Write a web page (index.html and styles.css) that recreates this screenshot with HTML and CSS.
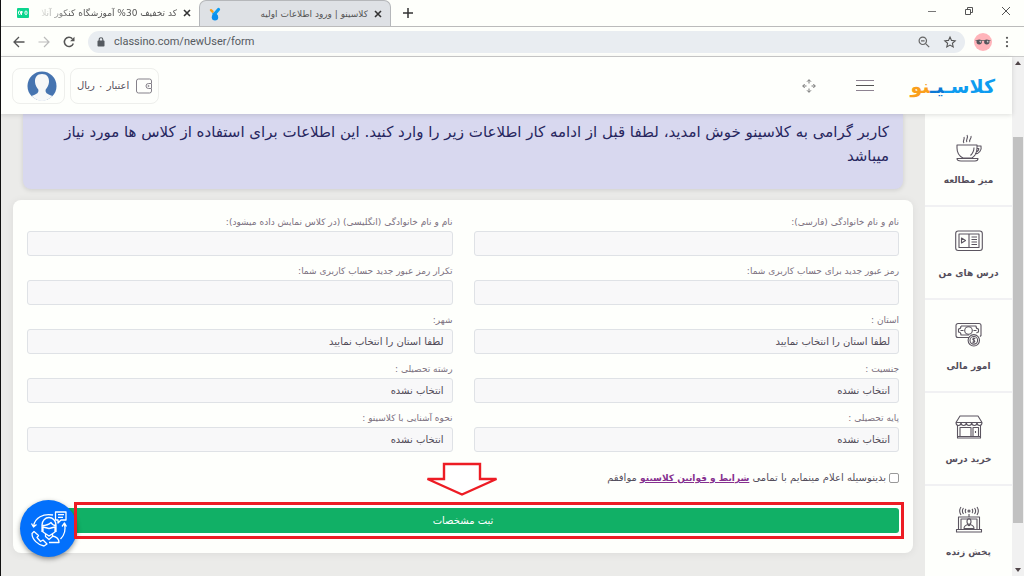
FILE: index.html
```html
<!DOCTYPE html>
<html lang="fa">
<head>
<meta charset="utf-8">
<title>کلاسینو | ورود اطلاعات اولیه</title>
<link rel="stylesheet" href="styles.css">
</head>
<body>
<div class="browser">
  <div class="tabs">
    <div class="tab">
      <svg class="favicon" width="12" height="12" viewBox="0 0 12 12"><rect y="1" width="12" height="10" rx="1" fill="#0cd58e"/><g fill="none" stroke="#fff" stroke-width="1"><rect x="1.5" y="4" width="2" height="3.5" rx="1"/><path d="M4.5 4v4M4.5 5H6"/><rect x="8" y="4" width="2" height="3.5" rx="1"/></g></svg>
      <span class="tab-title faded" dir="rtl">کد تخفیف 30% آموزشگاه کنکور آنلا</span>
      <button class="plain" aria-label="Close tab"><svg width="8" height="8" viewBox="0 0 8 8"><path d="M1 1l6 6M7 1L1 7" stroke="#333" stroke-width="1.6"/></svg></button>
    </div>
    <div class="tab active">
      <svg class="favicon" width="12" height="14" viewBox="0 0 12 14"><path d="M6 6.500L9.500 2.500" stroke="#0d9cf0" stroke-width="3.200" stroke-linecap="round"/><path d="M5.500 5.500l.5 4" stroke="#0d9cf0" stroke-width="4.500"/><circle cx="6" cy="10.200" r="3.200" fill="#0d8fec"/><path d="M2 3.200l1.500 1.500" stroke="#f9a11b" stroke-width="2.400" stroke-linecap="round"/></svg>
      <span class="tab-title" dir="rtl">کلاسینو | ورود اطلاعات اولیه</span>
      <button class="plain" aria-label="Close tab"><svg width="8" height="8" viewBox="0 0 8 8"><path d="M1 1l6 6M7 1L1 7" stroke="#333" stroke-width="1.6"/></svg></button>
    </div>
    <button class="plain new-tab" aria-label="New tab"><svg width="10" height="10" viewBox="0 0 10 10"><path d="M5 0v10M0 5h10" stroke="#333" stroke-width="1.5"/></svg></button>
    <div class="window-controls">
      <button class="plain" aria-label="Minimize"><svg width="10" height="10" viewBox="0 0 10 10"><path d="M1 5.5h8" stroke="#777"/></svg></button>
      <button class="plain" aria-label="Restore"><svg width="10" height="10" viewBox="0 0 10 10" fill="none" stroke="#555"><path d="M1.500 3.500h5v5h-5zM3.500 3.500v-2h5v5h-2"/></svg></button>
      <button class="plain" aria-label="Close"><svg width="10" height="10" viewBox="0 0 10 10"><path d="M1 1l8 8M9 1L1 9" stroke="#555"/></svg></button>
    </div>
  </div>
  <div class="toolbar">
    <button class="plain" aria-label="Back"><svg width="12" height="12" viewBox="0 0 12 12" fill="none" stroke="#555" stroke-width="1.3"><path d="M11.5 6H1.5M6 1L1 6l5 5"/></svg></button>
    <button class="plain" aria-label="Forward"><svg width="12" height="12" viewBox="0 0 12 12" fill="none" stroke="#bbb" stroke-width="1.2"><path d="M.5 6h10M6 1l5 5-5 5"/></svg></button>
    <button class="plain" aria-label="Reload"><svg width="12" height="12" viewBox="0 0 12 12" fill="none" stroke="#555" stroke-width="1.5"><path d="M10.3 7.5A4.6 4.6 0 1 1 9.4 2.8"/><path d="M11.5.8v4.4H7.1z" fill="#555" stroke="none"/></svg></button>
    <div class="address">
      <svg width="8" height="10" viewBox="0 0 8 10"><rect x=".5" y="3.6" width="7" height="6" rx=".8" fill="#555a60"/><path d="M2.2 4V2.5a1.8 1.8 0 0 1 3.6 0V4" fill="none" stroke="#555a60" stroke-width="1.1"/></svg>
      <input class="url" aria-label="Address" value="classino.com/newUser/form">
      <button class="plain" aria-label="Zoom"><svg width="12" height="12" viewBox="0 0 12 12" fill="none" stroke="#666" stroke-width="1.2"><circle cx="4.8" cy="4.8" r="3.7"/><path d="M7.6 7.6l3.6 3.6M3 4.8h3.6"/></svg></button>
      <button class="plain" aria-label="Bookmark"><svg width="12" height="12" viewBox="0 0 12 12" fill="none" stroke="#555" stroke-width="1.1"><path d="M6 1l1.5 3.4 3.7.4-2.8 2.5.8 3.6L6 9.1l-3.2 1.8.8-3.6L.8 4.8l3.7-.4z"/></svg></button>
    </div>
    <svg class="profile" width="18" height="18" viewBox="0 0 18 18"><circle cx="9" cy="9" r="9" fill="#ffb4ba"/><path d="M1.500 7.500h15" stroke="#666" stroke-width=".8"/><ellipse cx="5.200" cy="9" rx="2.700" ry="2.400" fill="#55545b"/><ellipse cx="12.800" cy="9" rx="2.700" ry="2.400" fill="#55545b"/><path d="M5.800 7.800l1 1.600M13.200 7.800l1 1.600" stroke="#ccc" stroke-width="1.300"/></svg>
    <button class="plain" aria-label="Menu"><svg width="4" height="12" viewBox="0 0 4 12" fill="#555"><circle cx="2" cy="1.8" r="1.1"/><circle cx="2" cy="6" r="1.1"/><circle cx="2" cy="10.2" r="1.1"/></svg></button>
  </div>
</div>

<div class="viewport">
  <div class="site" dir="rtl">
    <header class="site-header">
      <a class="logo" href="#"><span>کلاسـ</span><span class="deep">یـ</span><span class="orange">نو</span></a>
      <button class="plain menu" aria-label="منو"><svg width="18" height="12" viewBox="0 0 18 12"><path d="M0 .5h18M0 10.500h18" stroke="#8d8291"/><path d="M0 5.500h18" stroke="#555"/></svg></button>
      <button class="plain move" aria-label="تمام صفحه"><svg width="14" height="14" viewBox="0 0 14 14" fill="none" stroke="#777" stroke-width="1"><path d="M7 4.500V.8M5 2.700l2-2 2 2M7 9.500v3.700M5 11.300l2 2 2-2M4.500 7H.8M2.700 5l-2 2 2 2M9.500 7h3.700M11.300 5l2 2-2 2"/></svg></button>
      <div class="account">
        <a class="chip credit" href="#"><svg width="16" height="16" viewBox="0 0 16 16" fill="none" stroke="#85818a"><path d="M15.500 5V3A2 2 0 0 0 13.500 1H2.500A2 2 0 0 0 .5 3v10a2 2 0 0 0 2 2h11a2 2 0 0 0 2-2v-2"/><path d="M15.500 5.500h-3a2.500 2.500 0 0 0 0 5h3z"/><circle cx="12.500" cy="8" r=".6"/></svg><span>اعتبار ۰ ریال</span></a>
        <a class="chip avatar" href="#" aria-label="حساب کاربری"><svg width="30" height="30" viewBox="0 0 30 30"><circle cx="15" cy="15" r="14.500" fill="#4674b0"/><path d="M15 3c-5 0-7.300 3.500-7 8 .2 3.500 1.800 5.500 3.300 7.500.6 3-.8 4.500-6.800 6.500C8 28.500 12 30 15 30s7-1.500 10.500-5c-6-2-7.400-3.500-6.800-6.500 1.500-2 3.100-4 3.300-7.500.3-4.500-2-8-7-8z" fill="#f7f8f8"/></svg></a>
      </div>
    </header>
    <div class="site-body">
      <nav class="sidebar">
        <a href="#"><svg width="28" height="28" viewBox="0 0 28 28"><path d="M2 11h20v3c0 5-2 8-5 10H8c-4-2-6-5-6-10zM2 24.500h21c0 2-1 2.500-3 2.500H6c-3 0-4-1-4-2.500zM22 12h4c1 4-2 8-6 8M22 14.500h1.800c0 2-1 3-2.800 3.500M19 13.500c0 4-1.500 6-3.500 8M9 9c-2-2 1-3 0-6M12 8c-2-2 2-4 0-7M15 8c-2-2 2-3 1-6"/></svg><span>میز مطالعه</span></a>
        <a href="#"><svg width="28" height="28" viewBox="0 0 28 28"><rect x=".7" y="4" width="26.600" height="19.500" rx="2.500"/><path d="M4 7h20v13.500H4zM14 7v13.500M6.500 11v5l4-2.500zM16.500 10h5.500M16.500 12.500h5.500M16.500 15h5.500M16.500 17.500h5.500M12 23.500h4"/></svg><span>درس های من</span></a>
        <a href="#"><svg width="28" height="28" viewBox="0 0 28 28"><path d="M14 17.500H3a2 2 0 0 1-2-2v-10a2 2 0 0 1 2-2h21a2 2 0 0 1 2 2v10l-1 1M6 6h15c0 2 .5 3 2.500 3v3c-1 0-1.500.5-2 1M14 15H6c0-2-.5-3-2.500-3V9C5.500 9 6 8 6 6M5.500 10.500h3M18.500 10.500h3"/><circle cx="13.500" cy="10.500" r="3.800"/><circle cx="18.800" cy="20.300" r="5.700"/><circle cx="18.800" cy="20.300" r="3.800"/><path d="M20.300 18.700c-2-1.200-3.600.7-1.500 1.600s.5 2.800-1.500 1.600M18.800 17.500v5.600"/></svg><span>امور مالی</span></a>
        <a href="#"><svg width="28" height="28" viewBox="0 0 28 28"><path d="M5 3h18l4 6.500H1zM1 9.500c0 4 5 4 5 0 0 4 5.300 4 5.300 0 0 4 5.400 4 5.400 0 0 4 5.300 4 5.300 0 0 4 5 4 5 0M2.500 12.500v12.500h23V12.500M2.500 23.500h23M5 14.500h11v9H5zM18 23.500v-9h5.500v9M20.500 18v2"/></svg><span>خرید درس</span></a>
        <a href="#"><svg width="28" height="28" viewBox="0 0 28 28"><path d="M3.500 23.500V11H24.500v12.500M6 23V13h16v10M1.500 23.500h25V26h-25zM9 22.500c0-3 2-3.500 4-4 .5 1.500 1.500 1.500 2 0 2 .5 4 1 4 4zM14 8v3"/><ellipse cx="14" cy="15.500" rx="2" ry="2.800"/><circle cx="14" cy="5" r="1"/><path d="M11 3c-1 1-1 3 0 4M8.500 2c-1.500 2-1.500 4 0 6M6 1c-2 3-2 5 0 8M17 3c1 1 1 3 0 4M19.500 2c1.500 2 1.500 4 0 6M22 1c2 3 2 5 0 8"/></svg><span>پخش زنده</span></a>
      </nav>
      <main class="content">
        <section class="notice"><p>کاربر گرامی به کلاسینو خوش امدید، لطفا قبل از ادامه کار اطلاعات زیر را وارد کنید. این اطلاعات برای استفاده از کلاس ها مورد نیاز میباشد</p></section>
        <form class="card">
          <div class="fields">
            <div class="field"><label for="fa-name">نام و نام خانوادگی (فارسی):</label><input id="fa-name" type="text"></div>
            <div class="field"><label for="en-name">نام و نام خانوادگی (انگلیسی) (در کلاس نمایش داده میشود):</label><input id="en-name" type="text"></div>
            <div class="field"><label for="pass">رمز عبور جدید برای حساب کاربری شما:</label><input id="pass" type="password"></div>
            <div class="field"><label for="pass2">تکرار رمز عبور جدید حساب کاربری شما:</label><input id="pass2" type="password"></div>
            <div class="field"><label for="province">استان :</label><select id="province"><option>لطفا استان را انتخاب نمایید</option></select></div>
            <div class="field"><label for="city">شهر:</label><select id="city"><option>لطفا استان را انتخاب نمایید</option></select></div>
            <div class="field"><label for="gender">جنسیت :</label><select id="gender"><option>انتخاب نشده</option></select></div>
            <div class="field"><label for="major">رشته تحصیلی :</label><select id="major"><option>انتخاب نشده</option></select></div>
            <div class="field"><label for="grade">پایه تحصیلی :</label><select id="grade"><option>انتخاب نشده</option></select></div>
            <div class="field"><label for="source">نحوه آشنایی با کلاسینو :</label><select id="source"><option>انتخاب نشده</option></select></div>
          </div>
          <div class="agree"><input id="agree" type="checkbox"><label for="agree">بدینوسیله اعلام مینمایم با تمامی <a href="#">شرایط و قوانین کلاسینو</a> موافقم</label></div>
          <div class="submit-row">
            <button class="submit" type="submit">ثبت مشخصات</button>
            <button class="support" type="button" aria-label="پشتیبانی"><svg width="36" height="36" viewBox="0 0 36 36" fill="none" stroke="#fff" stroke-width="1.300" stroke-linejoin="round"><path d="M24.500 1h10.500v8h-5l-3 3V9h-2.500zM27 3.700h6M27 6.300h5M2.500 15C4 7 12 2 22 4M.5 12.500l2 3.500 3-2.500M33.500 13c1.500 6 0 11-4 15M31 15.500l2.500-3.500 2 3.500"/><path d="M11 21v-7a7 7.500 0 0 1 14 0v7M11 14.500c4 0 7-1 9-3 1 2 2 3 5 3M12 16l6 1.500 6-1.500v5l-6 4-6-4zM14.500 23v2.500l3.500 3 3.500-3V23M21.500 25c5 1 6.500 3 6.500 6.500H18"/><path d="M3 20.500l-2 2c0 6 6 11.500 12 12.500l3-2-4-4-2.500 1.500-3.500-4 1.500-2z"/></svg></button>
            <div class="highlight"></div>
            <svg class="arrow" width="76" height="36" viewBox="0 0 76 36"><path d="M20 2h36v15h16.500L38 32.500 3.500 17H20z" fill="#fff" stroke="#ed1c24" stroke-width="2.400"/></svg>
          </div>
        </form>
      </main>
    </div>
  </div>
  <div class="scrollbar">
    <svg width="6" height="4" viewBox="0 0 6 4"><path d="M0 4l3-4 3 4z" fill="#504548"/></svg>
    <div class="track"><div class="thumb"></div></div>
    <svg width="6" height="4" viewBox="0 0 6 4"><path d="M0 0l3 4 3-4z" fill="#504548"/></svg>
  </div>
</div>
</body>
</html>
```
FILE: styles.css
```css
* { box-sizing: border-box; }
body {
  margin: 0;
  height: 100vh;
  display: flex;
  flex-direction: column;
  overflow: hidden;
  border-left: 1px solid #111;
  background: #fefffb;
  font-family: "DejaVu Sans", sans-serif;
  color: #544e5b;
}
svg { display: block; flex: none; overflow: visible; }
.plain {
  border: 0;
  padding: 0;
  background: none;
  display: grid;
  place-items: center;
}
a { color: inherit; text-decoration: none; }

/* Browser window */
.tabs {
  display: flex;
  align-items: stretch;
  height: 27px;
  border-bottom: 1px solid #bbb;
}
.tab {
  display: flex;
  align-items: center;
  gap: 6px;
  width: 198px;
  padding: 0 8px 0 16px;
}
.tab.active {
  width: 192px;
  padding: 0 8px 0 9px;
  background: #dee1e5;
  border: 1px solid #b5b7ba;
  border-bottom: 0;
  border-radius: 7px 7px 0 0;
}
.tab-title {
  flex: 1;
  min-width: 0;
  overflow: hidden;
  white-space: nowrap;
  font-size: 9px;
  line-height: 20px;
  color: #555;
}
.faded { mask-image: linear-gradient(to right, transparent, #000 36px); }
.new-tab { margin-left: 12px; }
.window-controls {
  display: flex;
  gap: 27px;
  margin-left: auto;
  padding: 0 13px 4px 0;
}
.toolbar {
  display: flex;
  align-items: center;
  gap: 13px;
  height: 30px;
  padding: 0 15px 0 12px;
  border-bottom: 1px solid #ccc;
}
.address {
  flex: 1;
  display: flex;
  align-items: center;
  gap: 14px;
  height: 22px;
  padding: 0 9px;
  border-radius: 11px;
  background: #e9edf1;
}
.url {
  flex: 1;
  min-width: 0;
  margin-left: -5px;
  padding: 0;
  border: 0;
  background: none;
  font: 11px Roboto, sans-serif;
  color: #555a60;
}
.profile { margin-left: -4px; }

/* Page */
.viewport { flex: 1; min-height: 0; display: flex; }
.site { flex: 1; min-width: 0; display: flex; flex-direction: column; }
.site-header {
  position: relative;
  z-index: 1;
  display: flex;
  align-items: center;
  height: 57px;
  padding: 0 17px 0 11px;
  background: #fefffc;
  box-shadow: 0 1px 5px #0002;
}
.logo {
  font-size: 19px;
  font-weight: bold;
  line-height: 36px;
  color: #0d9cf0;
}
.deep { color: #0b78d4; }
.orange { color: #fa9f1c; }
.menu { margin-right: 36px; }
.move { margin-right: 40px; }
.account { display: flex; gap: 5px; margin-right: auto; }
.chip {
  display: flex;
  align-items: center;
  gap: 7px;
  height: 36px;
  border: 1px solid #eeefec;
  border-radius: 8px;
}
.credit { padding: 0 6px; font-size: 10px; }
.avatar { padding: 0 7px 0 14px; }
.site-body {
  flex: 1;
  min-height: 0;
  display: flex;
  background: #efefef;
}
.sidebar {
  width: 87px;
  background: #fefffc;
  box-shadow: 0 0 6px #0002;
}
.sidebar a {
  display: flex;
  flex-direction: column;
  align-items: center;
  gap: 8px;
  height: 93px;
  padding-top: 20px;
  border-bottom: 2px solid #f1f1f3;
  font-size: 9px;
  font-weight: bold;
  line-height: 20px;
}
.sidebar svg {
  fill: none;
  stroke: #5b5560;
  stroke-width: 1.1;
  stroke-linejoin: round;
}
.content {
  flex: 1;
  min-width: 0;
  display: flex;
  flex-direction: column;
  gap: 11px;
  padding: 0 12px;
  background: #ebebe9;
}
.notice {
  height: 75px;
  margin: 0 10px;
  padding: 6px 14px 0;
  border-radius: 0 0 8px 8px;
  background: #d8d8ef;
  box-shadow: 0 1px 5px #0002;
  color: #27265e;
}
.notice p { margin: 0; font-size: 15px; line-height: 24px; }
.card {
  padding: 10px 14px 20px;
  border-radius: 8px;
  background: #fefffc;
  box-shadow: 0 1px 8px #0001;
}
.fields {
  display: grid;
  grid-template-columns: 1fr 1fr;
  column-gap: 21px;
}
.field { display: flex; flex-direction: column; padding: 3px 0; }
.field label {
  font-size: 9px;
  line-height: 18px;
  color: #7c717f;
}
.field input, .field select {
  appearance: none;
  width: 100%;
  height: 25px;
  padding: 0 8px;
  border: 1px solid #dfe2e6;
  border-radius: 3px;
  background: #f8f8f9;
  font: 10px "DejaVu Sans", sans-serif;
  color: #514b58;
}
.agree {
  display: flex;
  align-items: center;
  gap: 3px;
  margin-top: 13px;
  font-size: 10px;
  line-height: 20px;
}
.agree input {
  appearance: none;
  width: 10px;
  height: 10px;
  margin: 0;
  border: 1px solid #999;
  border-radius: 2px;
  background: #fff;
}
.agree a {
  font-size: 9px;
  font-weight: bold;
  text-decoration: underline;
  color: #86308f;
}
.submit-row { position: relative; margin-top: 20px; }
.submit {
  display: block;
  width: 100%;
  height: 25px;
  padding: 0;
  border: 0;
  border-radius: 3px;
  background: #11b066;
  font: 10px "DejaVu Sans", sans-serif;
  color: #fff;
}
.highlight {
  position: absolute;
  inset: -6px -5px -6px 47px;
  border: 3px solid #ed1c24;
  pointer-events: none;
}
.support {
  position: absolute;
  left: -7px;
  top: -8px;
  display: grid;
  place-items: center;
  width: 57px;
  height: 57px;
  padding: 0;
  border: 0;
  border-radius: 50%;
  background: #0270fc;
  box-shadow: 0 2px 5px #0006;
}
.arrow {
  position: absolute;
  left: calc(50% - 39px);
  top: -46px;
}
.scrollbar {
  width: 12px;
  display: flex;
  flex-direction: column;
  align-items: center;
  padding: 4px 0;
  background: #f1f1f1;
}
.track { flex: 1; width: 10px; padding: 72px 0 45px; }
.thumb { height: 100%; background: #c1c1c1; }
```
